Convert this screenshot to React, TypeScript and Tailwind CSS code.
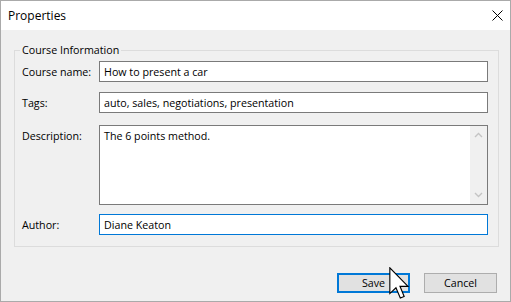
const font = { fontFamily: '"Open Sans", "Noto Sans", sans-serif' };

function Field({ label, value, focused }: { label: string; value: string; focused?: boolean }) {
  return (
    <div className="flex items-center h-[21px]">
      <div className="w-[77px] shrink-0 leading-[16px]">{label}</div>
      <div
        className={`flex-1 h-[21px] bg-white border px-[4px] flex items-center leading-[16px] ${
          focused ? 'border-[#0078d7]' : 'border-[#7a7a7a]'
        }`}
      >
        {value}
      </div>
    </div>
  );
}

function Chevron({ up }: { up?: boolean }) {
  return (
    <svg width="9" height="6" viewBox="0 0 9 6" className="block">
      <path
        d={up ? 'M1 5 L4.5 1.5 L8 5' : 'M1 1 L4.5 4.5 L8 1'}
        fill="none"
        stroke="#c4c4c4"
        strokeWidth="1.4"
      />
    </svg>
  );
}

export default function App() {
  return (
    <div
      className="relative w-[511px] h-[302px] border border-[#aaaaaa] flex flex-col overflow-hidden text-black text-[10.7px]"
      style={font}
    >
      {/* title bar */}
      <div className="h-[29px] shrink-0 bg-white flex items-center justify-between pl-[7px] pr-[7px]">
        <span className="text-[12px] leading-[16px]">Properties</span>
        <svg width="11" height="11" viewBox="0 0 11 11" className="block">
          <path d="M0.5 0.5 L10.5 10.5 M10.5 0.5 L0.5 10.5" stroke="#000" strokeWidth="1" />
        </svg>
      </div>

      {/* body */}
      <div className="flex-1 bg-[#f0f0f0] pl-[13px] pr-[11px] pt-[12px] flex flex-col">
        <fieldset className="border border-[#dcdcdc] pl-[7px] pr-[10px] pb-[11px]">
          <legend className="ml-[-2px] px-[2px] leading-[16px]">Course Information</legend>

          <div className="mt-[3px]">
            <Field label="Course name:" value="How to present a car" />
          </div>
          <div className="mt-[10px]">
            <Field label="Tags:" value="auto, sales, negotiations, presentation" />
          </div>

          <div className="mt-[12px] flex h-[80px]">
            <div className="w-[77px] shrink-0 pt-[3px] leading-[16px]">Description:</div>
            <div className="flex-1 flex bg-white border border-[#7a7a7a]">
              <div className="flex-1 px-[4px] pt-[2px] leading-[16px]">The 6 points method.</div>
              <div className="w-[17px] bg-[#f0f0f0] flex flex-col items-center justify-between py-[6px]">
                <Chevron up />
                <Chevron />
              </div>
            </div>
          </div>

          <div className="mt-[9px]">
            <Field label="Author:" value="Diane Keaton" focused />
          </div>
        </fieldset>

        <div className="mt-[26px] flex justify-end gap-[14px] pr-[2px]">
          <button className="w-[73px] h-[20px] bg-[#e1e1e1] border-2 border-[#0078d7] flex items-center justify-center leading-[16px]">
            Save
          </button>
          <button className="w-[73px] h-[20px] bg-[#e1e1e1] border border-[#adadad] flex items-center justify-center leading-[16px]">
            Cancel
          </button>
        </div>
      </div>

      {/* mouse pointer */}
      <svg
        width="21"
        height="33"
        viewBox="0 0 13 20.5"
        className="absolute left-[388px] top-[266px] pointer-events-none"
      >
        <path
          d="M0.5 0.5 V16.5 L4.3 12.9 L7 19.3 L9.4 18.3 L6.8 12 H11.8 Z"
          fill="#fff"
          stroke="#000"
          strokeWidth="0.7"
          strokeLinejoin="miter"
        />
      </svg>
    </div>
  );
}
